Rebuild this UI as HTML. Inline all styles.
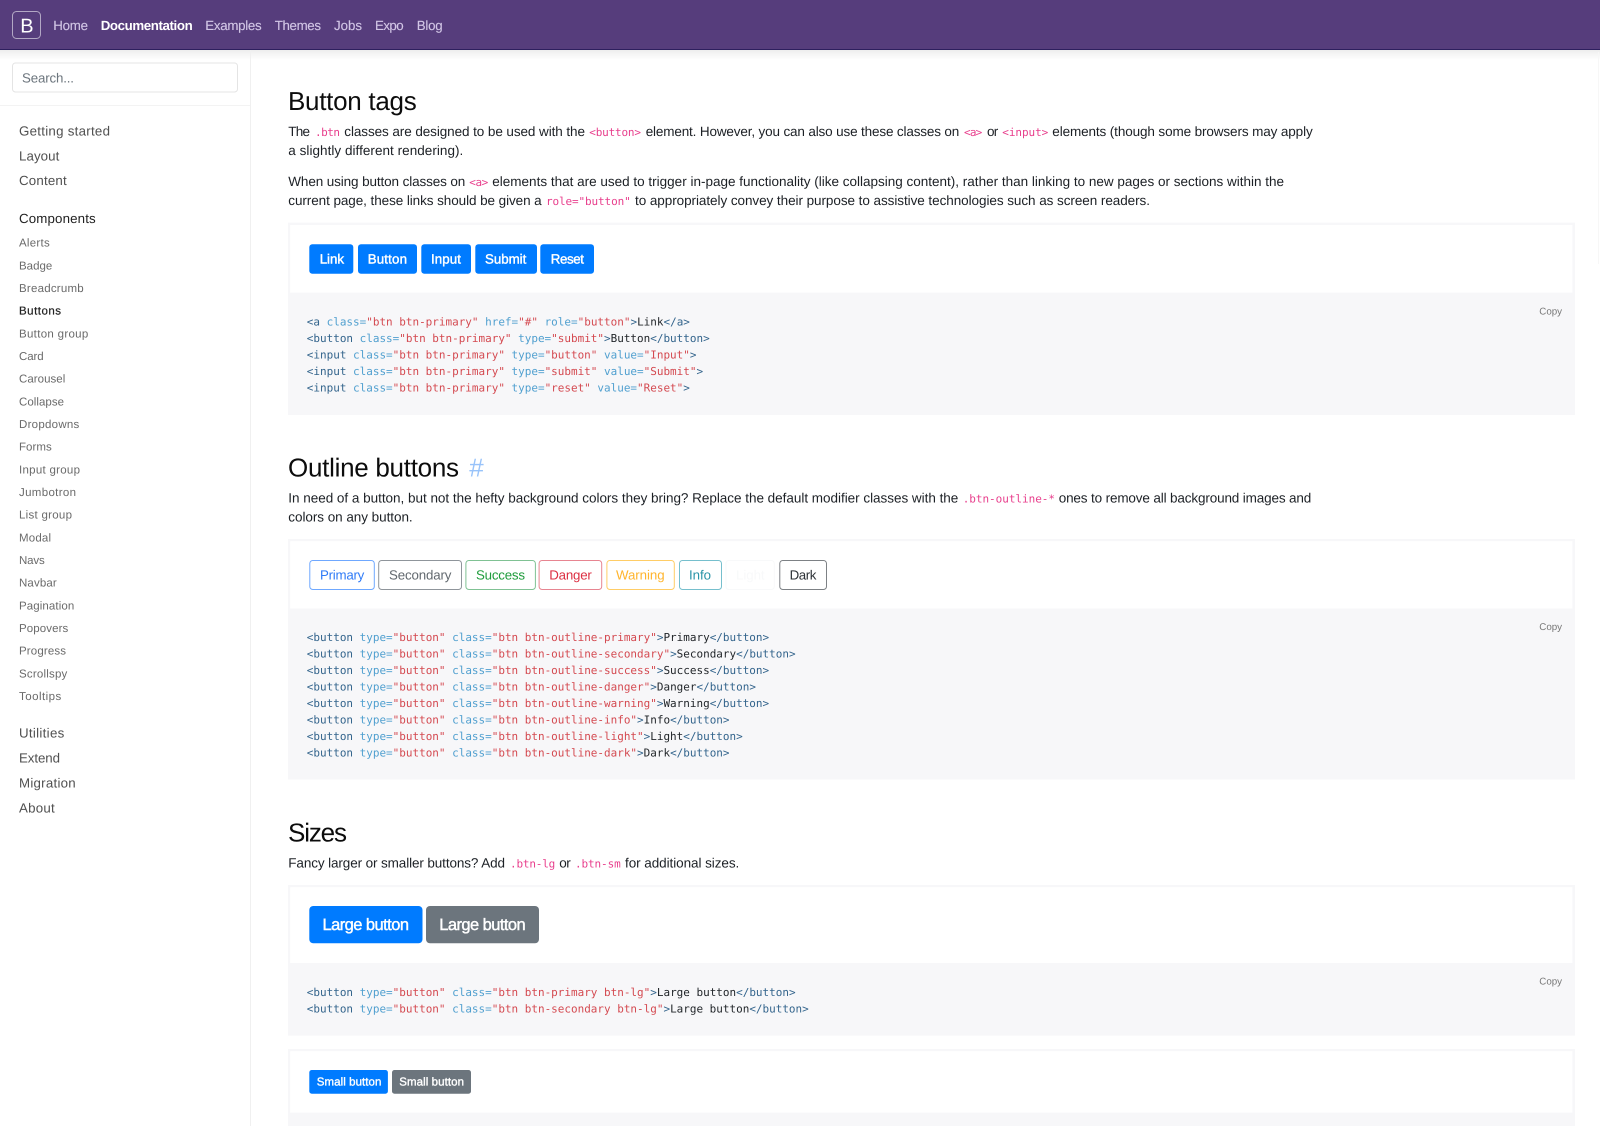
<!DOCTYPE html>
<html lang="en"><head><meta charset="utf-8"><title>Buttons</title>
<style>
html,body{margin:0;padding:0;background:#fff;width:1600px;height:1126px;overflow:hidden}
svg{display:block;font-family:"Liberation Sans",sans-serif;text-rendering:geometricPrecision;filter:blur(.3px)}
.b{font-size:13.5px;fill:#1c2025}
.c{font-family:"DejaVu Sans Mono",monospace;font-size:11px;fill:#e83e8c}
.h{font-size:26px;fill:#0c0c0c}
.nv{font-size:13.3px;fill:#d2c6e6;stroke:#d2c6e6;stroke-width:.12px}
.t{font-size:13.3px;fill:#505050}
.s{font-size:11.5px;fill:#6a6a6a;transform:translateY(-.3px)}
.w{font-size:13.3px;fill:#fff;stroke:#fff;stroke-width:.42px;transform:translateY(-.6px)}
.o{font-size:13.3px}
.k{font-family:"DejaVu Sans Mono",monospace;font-size:10.97px;fill:#212529;transform:translateY(-.55px)}
.k .g{fill:#33648c}.k .a{fill:#4f9fcf}.k .r{fill:#d44950}
.cp{font-size:9.8px;fill:#777}
</style></head><body>
<svg width="1600" height="1126" viewBox="0 0 1600 1126" xmlns="http://www.w3.org/2000/svg">
<defs><linearGradient id="sh" x1="0" y1="0" x2="0" y2="1"><stop offset="0" stop-color="#000" stop-opacity=".07"/><stop offset="1" stop-color="#000" stop-opacity="0"/></linearGradient></defs>
<rect width="1600" height="1126" fill="#fff"/>
<!-- navbar -->
<rect x="0" y="0" width="1600" height="49.5" fill="#563d7c"/>
<rect x="0" y="49" width="1600" height="1" fill="#2d1f5e"/>
<rect x="0" y="50" width="1600" height="10" fill="url(#sh)"/>
<rect x="12.5" y="11.5" width="28" height="27" rx="4" fill="none" stroke="#fff" stroke-opacity=".55"/>
<text x="20.2" y="32.7" font-size="20" fill="#fff">B</text>
<text class="nv" x="53.3" y="30" textLength="34.7">Home</text>
<text class="nv" x="100.7" y="30" textLength="92" font-weight="bold" style="fill:#fff;stroke:none">Documentation</text>
<text class="nv" x="205.3" y="30" textLength="56.4">Examples</text>
<text class="nv" x="274.7" y="30" textLength="46.3">Themes</text>
<text class="nv" x="334" y="30" textLength="28">Jobs</text>
<text class="nv" x="375" y="30" textLength="28.7">Expo</text>
<text class="nv" x="416.7" y="30" textLength="26">Blog</text>
<!-- sidebar -->
<rect x="250" y="50" width="1" height="1076" fill="#f0f0f0"/>
<rect x="0" y="105" width="250" height="1" fill="#f3f3f3"/>
<rect x="12.5" y="63" width="225" height="29" rx="3" fill="#fff" stroke="#e4e4e4" stroke-width="1"/>
<text class="t" x="22" y="82.3" textLength="52" style="fill:#6c757d">Search...</text>
<text class="t" x="19" y="135.4" textLength="91">Getting started</text>
<text class="t" x="19" y="160.5" textLength="40.3">Layout</text>
<text class="t" x="19" y="185.2" textLength="47.7">Content</text>
<text class="t" x="19" y="223.1" textLength="76.7" style="fill:#222">Components</text>
<text class="s" x="19" y="246.9" textLength="30.7">Alerts</text>
<text class="s" x="19" y="269.6" textLength="33.3">Badge</text>
<text class="s" x="19" y="292.2" textLength="64.7">Breadcrumb</text>
<text class="s" x="19" y="314.9" textLength="42" style="fill:#222;stroke:#222;stroke-width:.2px">Buttons</text>
<text class="s" x="19" y="337.6" textLength="69.3">Button group</text>
<text class="s" x="19" y="360.2" textLength="24.7">Card</text>
<text class="s" x="19" y="382.9" textLength="46.3">Carousel</text>
<text class="s" x="19" y="405.6" textLength="45">Collapse</text>
<text class="s" x="19" y="428.3" textLength="60.3">Dropdowns</text>
<text class="s" x="19" y="450.9" textLength="32.7">Forms</text>
<text class="s" x="19" y="473.6" textLength="61">Input group</text>
<text class="s" x="19" y="496.3" textLength="57">Jumbotron</text>
<text class="s" x="19" y="518.9" textLength="53">List group</text>
<text class="s" x="19" y="541.6" textLength="32">Modal</text>
<text class="s" x="19" y="564.3" textLength="25.7">Navs</text>
<text class="s" x="19" y="586.9" textLength="37.7">Navbar</text>
<text class="s" x="19" y="609.6" textLength="55.3">Pagination</text>
<text class="s" x="19" y="632.3" textLength="49.3">Popovers</text>
<text class="s" x="19" y="654.9" textLength="47">Progress</text>
<text class="s" x="19" y="677.6" textLength="48.3">Scrollspy</text>
<text class="s" x="19" y="700.3" textLength="42.3">Tooltips</text>
<text class="t" x="19" y="737.6" textLength="45.3">Utilities</text>
<text class="t" x="19" y="762.6" textLength="41">Extend</text>
<text class="t" x="19" y="787.7" textLength="56.7">Migration</text>
<text class="t" x="19" y="812.7" textLength="35.7">About</text>
<rect x="1598" y="52" width="1" height="212" fill="#f7f7f7"/>

<!-- Button tags -->
<text class="h" x="288" y="110" textLength="128.7">Button tags</text>
<text class="b" x="288.3" y="136" textLength="21.7">The</text>
<text class="c" x="315" y="136" textLength="25">.btn</text>
<text class="b" x="344.3" y="136" textLength="240.7">classes are designed to be used with the</text>
<text class="c" x="589.3" y="136" textLength="51.7">&lt;button&gt;</text>
<text class="b" x="645.7" y="136" textLength="313.6">element. However, you can also use these classes on</text>
<text class="c" x="964" y="136" textLength="18.3">&lt;a&gt;</text>
<text class="b" x="987" y="136" textLength="11.3">or</text>
<text class="c" x="1002.3" y="136" textLength="46">&lt;input&gt;</text>
<text class="b" x="1052.3" y="136" textLength="260.4">elements (though some browsers may apply</text>
<text class="b" x="288.3" y="155" textLength="175">a slightly different rendering).</text>
<text class="b" x="288.3" y="186" textLength="177">When using button classes on</text>
<text class="c" x="469.3" y="186" textLength="19">&lt;a&gt;</text>
<text class="b" x="492.3" y="186" textLength="791.7">elements that are used to trigger in-page functionality (like collapsing content), rather than linking to new pages or sections within the</text>
<text class="b" x="288.3" y="205" textLength="253.4">current page, these links should be given a</text>
<text class="c" x="546" y="205" textLength="84.7">role="button"</text>
<text class="b" x="635" y="205" textLength="515">to appropriately convey their purpose to assistive technologies such as screen readers.</text>

<rect x="288" y="222.7" width="1287" height="192.3" fill="#f7f7f9"/>
<rect x="290.2" y="225" width="1282.2" height="67.7" fill="#fff"/>
<rect x="309.3" y="244.3" width="44" height="29.4" rx="3" fill="#007bff"/>
<rect x="358" y="244.3" width="59" height="29.4" rx="3" fill="#007bff"/>
<rect x="421.3" y="244.3" width="49.7" height="29.4" rx="3" fill="#007bff"/>
<rect x="475.3" y="244.3" width="61.7" height="29.4" rx="3" fill="#007bff"/>
<rect x="540.3" y="244.3" width="53.7" height="29.4" rx="3" fill="#007bff"/>
<text class="w" x="319.7" y="264.3" textLength="24.3">Link</text>
<text class="w" x="367.7" y="264.3" textLength="39.3">Button</text>
<text class="w" x="431" y="264.3" textLength="30">Input</text>
<text class="w" x="485" y="264.3" textLength="41.3">Submit</text>
<text class="w" x="550.7" y="264.3" textLength="33.3">Reset</text>
<text class="cp" x="1539.3" y="314.5" textLength="22.7">Copy</text>
<text class="k" x="306.8" y="326"><tspan class="g">&lt;a</tspan> <tspan class="a">class=</tspan><tspan class="r">"btn btn-primary"</tspan> <tspan class="a">href=</tspan><tspan class="r">"#"</tspan> <tspan class="a">role=</tspan><tspan class="r">"button"</tspan><tspan class="g">&gt;</tspan>Link<tspan class="g">&lt;/a&gt;</tspan></text>
<text class="k" x="306.8" y="342.5"><tspan class="g">&lt;button</tspan> <tspan class="a">class=</tspan><tspan class="r">"btn btn-primary"</tspan> <tspan class="a">type=</tspan><tspan class="r">"submit"</tspan><tspan class="g">&gt;</tspan>Button<tspan class="g">&lt;/button&gt;</tspan></text>
<text class="k" x="306.8" y="358.9"><tspan class="g">&lt;input</tspan> <tspan class="a">class=</tspan><tspan class="r">"btn btn-primary"</tspan> <tspan class="a">type=</tspan><tspan class="r">"button"</tspan> <tspan class="a">value=</tspan><tspan class="r">"Input"</tspan><tspan class="g">&gt;</tspan></text>
<text class="k" x="306.8" y="375.4"><tspan class="g">&lt;input</tspan> <tspan class="a">class=</tspan><tspan class="r">"btn btn-primary"</tspan> <tspan class="a">type=</tspan><tspan class="r">"submit"</tspan> <tspan class="a">value=</tspan><tspan class="r">"Submit"</tspan><tspan class="g">&gt;</tspan></text>
<text class="k" x="306.8" y="391.9"><tspan class="g">&lt;input</tspan> <tspan class="a">class=</tspan><tspan class="r">"btn btn-primary"</tspan> <tspan class="a">type=</tspan><tspan class="r">"reset"</tspan> <tspan class="a">value=</tspan><tspan class="r">"Reset"</tspan><tspan class="g">&gt;</tspan></text>

<!-- Outline -->
<text class="h" x="288" y="476.7" textLength="171">Outline buttons</text>
<text class="h" x="469.3" y="476.7" style="fill:#98c3fa" textLength="14.8">#</text>
<text class="b" x="288.3" y="502.7" textLength="670">In need of a button, but not the hefty background colors they bring? Replace the default modifier classes with the</text>
<text class="c" x="962.7" y="502.7" textLength="92.3">.btn-outline-*</text>
<text class="b" x="1058.7" y="502.7" textLength="252.6">ones to remove all background images and</text>
<text class="b" x="288.3" y="521.7" textLength="124.4">colors on any button.</text>

<rect x="288" y="539" width="1287" height="240.5" fill="#f7f7f9"/>
<rect x="290.2" y="541.2" width="1282.2" height="67.3" fill="#fff"/>
<g fill="none" stroke-width="1">
<rect x="309.8" y="560.5" width="64.5" height="29" rx="3" stroke="#6fa8ff"/>
<rect x="378.7" y="560.5" width="82.8" height="29" rx="3" stroke="#8f959b"/>
<rect x="465.9" y="560.5" width="69.5" height="29" rx="3" stroke="#80c294"/>
<rect x="539.1" y="560.5" width="62.6" height="29" rx="3" stroke="#e78591"/>
<rect x="606.9" y="560.5" width="67.4" height="29" rx="3" stroke="#ffcd66"/>
<rect x="679.5" y="560.5" width="42" height="29" rx="3" stroke="#76bfcd"/>
<rect x="725.9" y="560.5" width="48.4" height="29" rx="3" stroke="#f8f9fa"/>
<rect x="779.8" y="560.5" width="46.7" height="29" rx="3" stroke="#7d8185"/>
</g>
<text class="o" x="320" y="579.3" textLength="44.3" style="fill:#2f7bf7">Primary</text>
<text class="o" x="389" y="579.3" textLength="62.4" style="fill:#62696f">Secondary</text>
<text class="o" x="476" y="579.3" textLength="49" style="fill:#1f9c3c">Success</text>
<text class="o" x="549.3" y="579.3" textLength="42.5" style="fill:#dc2f42">Danger</text>
<text class="o" x="616" y="579.3" textLength="48.6" style="fill:#ffb52e">Warning</text>
<text class="o" x="689" y="579.3" textLength="22" style="fill:#2a94a8">Info</text>
<text class="o" x="736" y="579.3" textLength="28.6" style="fill:#f8f9fa">Light</text>
<text class="o" x="789.6" y="579.3" textLength="26.8" style="fill:#2b3035">Dark</text>
<text class="cp" x="1539.3" y="630" textLength="22.7">Copy</text>
<text class="k" x="306.8" y="641.7"><tspan class="g">&lt;button</tspan> <tspan class="a">type=</tspan><tspan class="r">"button"</tspan> <tspan class="a">class=</tspan><tspan class="r">"btn btn-outline-primary"</tspan><tspan class="g">&gt;</tspan>Primary<tspan class="g">&lt;/button&gt;</tspan></text>
<text class="k" x="306.8" y="658.2"><tspan class="g">&lt;button</tspan> <tspan class="a">type=</tspan><tspan class="r">"button"</tspan> <tspan class="a">class=</tspan><tspan class="r">"btn btn-outline-secondary"</tspan><tspan class="g">&gt;</tspan>Secondary<tspan class="g">&lt;/button&gt;</tspan></text>
<text class="k" x="306.8" y="674.6"><tspan class="g">&lt;button</tspan> <tspan class="a">type=</tspan><tspan class="r">"button"</tspan> <tspan class="a">class=</tspan><tspan class="r">"btn btn-outline-success"</tspan><tspan class="g">&gt;</tspan>Success<tspan class="g">&lt;/button&gt;</tspan></text>
<text class="k" x="306.8" y="691.1"><tspan class="g">&lt;button</tspan> <tspan class="a">type=</tspan><tspan class="r">"button"</tspan> <tspan class="a">class=</tspan><tspan class="r">"btn btn-outline-danger"</tspan><tspan class="g">&gt;</tspan>Danger<tspan class="g">&lt;/button&gt;</tspan></text>
<text class="k" x="306.8" y="707.6"><tspan class="g">&lt;button</tspan> <tspan class="a">type=</tspan><tspan class="r">"button"</tspan> <tspan class="a">class=</tspan><tspan class="r">"btn btn-outline-warning"</tspan><tspan class="g">&gt;</tspan>Warning<tspan class="g">&lt;/button&gt;</tspan></text>
<text class="k" x="306.8" y="724"><tspan class="g">&lt;button</tspan> <tspan class="a">type=</tspan><tspan class="r">"button"</tspan> <tspan class="a">class=</tspan><tspan class="r">"btn btn-outline-info"</tspan><tspan class="g">&gt;</tspan>Info<tspan class="g">&lt;/button&gt;</tspan></text>
<text class="k" x="306.8" y="740.5"><tspan class="g">&lt;button</tspan> <tspan class="a">type=</tspan><tspan class="r">"button"</tspan> <tspan class="a">class=</tspan><tspan class="r">"btn btn-outline-light"</tspan><tspan class="g">&gt;</tspan>Light<tspan class="g">&lt;/button&gt;</tspan></text>
<text class="k" x="306.8" y="757"><tspan class="g">&lt;button</tspan> <tspan class="a">type=</tspan><tspan class="r">"button"</tspan> <tspan class="a">class=</tspan><tspan class="r">"btn btn-outline-dark"</tspan><tspan class="g">&gt;</tspan>Dark<tspan class="g">&lt;/button&gt;</tspan></text>

<!-- Sizes -->
<text class="h" x="288" y="841.7" textLength="59">Sizes</text>
<text class="b" x="288.3" y="867.7" textLength="216.7">Fancy larger or smaller buttons? Add</text>
<text class="c" x="510" y="867.7" textLength="45.3">.btn-lg</text>
<text class="b" x="559.3" y="867.7" textLength="11.4">or</text>
<text class="c" x="575" y="867.7" textLength="45.7">.btn-sm</text>
<text class="b" x="625" y="867.7" textLength="114.3">for additional sizes.</text>

<rect x="288" y="885" width="1287" height="150.7" fill="#f7f7f9"/>
<rect x="290.2" y="887.2" width="1282.2" height="75.8" fill="#fff"/>
<rect x="309.3" y="906" width="113.2" height="37.3" rx="4" fill="#007bff"/>
<rect x="426" y="906" width="113" height="37.3" rx="4" fill="#6c757d"/>
<text class="w" x="322.5" y="930.4" textLength="86.5" style="font-size:16.5px">Large button</text>
<text class="w" x="439.3" y="930.4" textLength="86.4" style="font-size:16.5px">Large button</text>
<text class="cp" x="1539.3" y="984.5" textLength="22.7">Copy</text>
<text class="k" x="306.8" y="996.7"><tspan class="g">&lt;button</tspan> <tspan class="a">type=</tspan><tspan class="r">"button"</tspan> <tspan class="a">class=</tspan><tspan class="r">"btn btn-primary btn-lg"</tspan><tspan class="g">&gt;</tspan>Large button<tspan class="g">&lt;/button&gt;</tspan></text>
<text class="k" x="306.8" y="1013.2"><tspan class="g">&lt;button</tspan> <tspan class="a">type=</tspan><tspan class="r">"button"</tspan> <tspan class="a">class=</tspan><tspan class="r">"btn btn-secondary btn-lg"</tspan><tspan class="g">&gt;</tspan>Large button<tspan class="g">&lt;/button&gt;</tspan></text>

<rect x="288" y="1049" width="1287" height="77" fill="#f7f7f9"/>
<rect x="290.2" y="1051.2" width="1282.2" height="61.5" fill="#fff"/>
<rect x="309.3" y="1070" width="78.6" height="23.7" rx="2.5" fill="#007bff"/>
<rect x="392" y="1070" width="79" height="23.7" rx="2.5" fill="#6c757d"/>
<text class="w" x="316.8" y="1086.3" textLength="64.6" style="font-size:11.5px;stroke-width:.35px">Small button</text>
<text class="w" x="399.3" y="1086.3" textLength="64.7" style="font-size:11.5px;stroke-width:.35px">Small button</text>
</svg>
</body></html>
